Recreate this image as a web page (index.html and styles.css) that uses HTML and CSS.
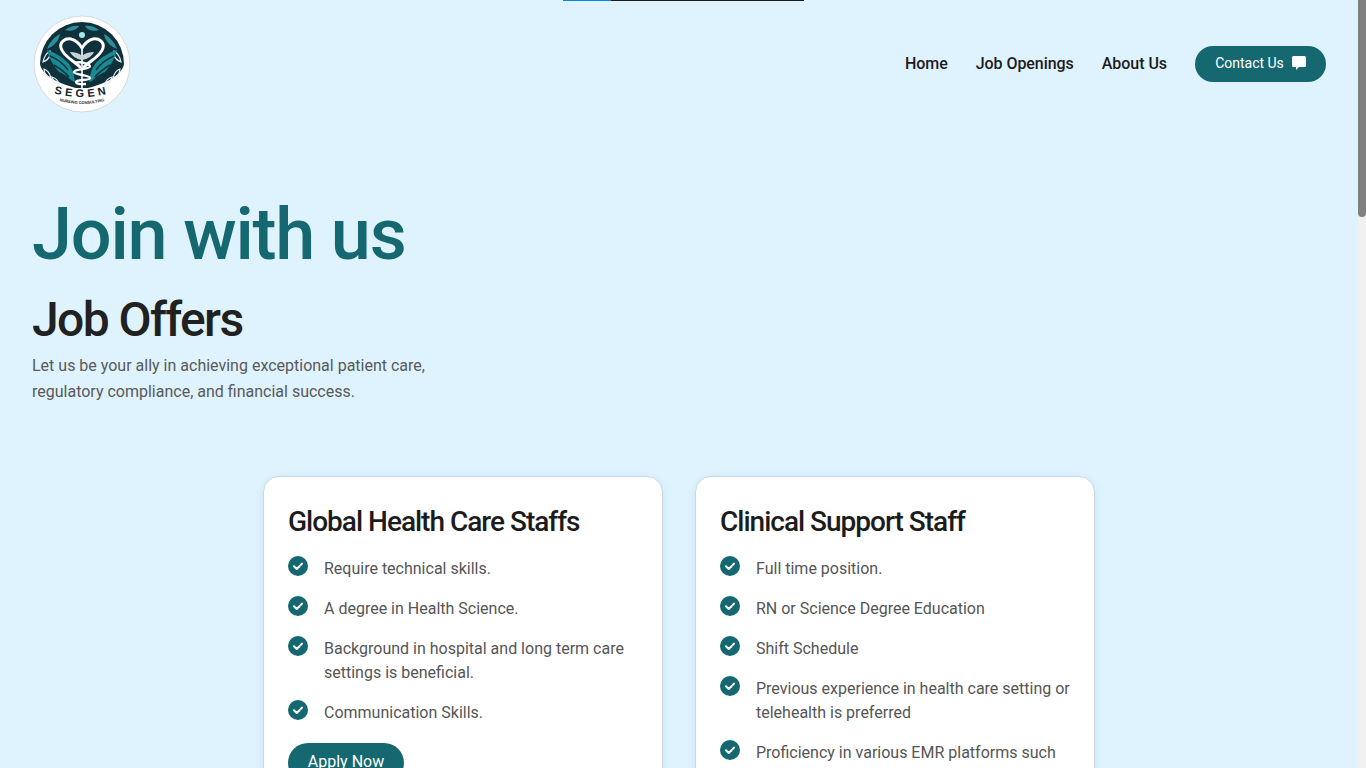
FILE: index.html
```html
<!DOCTYPE html>
<html lang="en">
<head>
<meta charset="utf-8">
<title>Segen Nursing Consulting – Job Offers</title>
<link rel="stylesheet" href="styles.css">
</head>
<body>
<div class="progress"><span class="progress-head"></span><span class="progress-tail"></span></div>
<div class="scrollbar"><span class="scrollbar-thumb"></span></div>
<header class="site-header">
  <a class="logo" href="#" aria-label="Segen Nursing Consulting">
    <svg viewBox="0 0 100 100" width="100" height="100">
      <defs>
        <path id="arc-name" d="M14 77 Q50 89 86 77"/>
        <path id="arc-sub" d="M18 84 Q50 96 82 84"/>
      </defs>
      <circle cx="50" cy="50" r="48" fill="#fff" stroke="#d3dade" stroke-width="1"/>
      <path d="M8 50A42 42 0 0 1 92 50C90 62 72 70 56 74L44 74C28 70 10 62 8 50z" fill="#10303c"/>
      <g fill="#2a8f98">
        <path d="M33 16c4-3 9-5 14-4-2 4-9 6-14 4zM67 16c-4-3-9-5-14-4 2 4 9 6 14 4z"/>
        <path d="M15 35c2-6 7-12 13-15-1 7-6 12-13 15zM85 35c-2-6-7-12-13-15 1 7 6 12 13 15z"/>
      </g>
      <g fill="none" stroke="#e7eef0" stroke-width="1.200">
        <path d="M11 48c1-6 4-9 7-11 1 5-2 9-7 11zM89 48c-1-6-4-9-7-11-1 5 2 9 7 11z"/>
        <path d="M12 55c3 1 6 5 7 9-4-1-7-5-7-9zM88 55c-3 1-6 5-7 9 4-1 7-5 7-9z"/>
        <path d="M20 63c3 1 6 3 7 7-4 0-6-3-7-7zM80 63c-3 1-6 3-7 7 4 0 6-3 7-7z"/>
      </g>
      <path d="M43 68C31 64 20 54 15 36c9 3 17 8 22 14 3 4 5 10 6 18z" fill="#178a94"/>
      <path d="M57 68C69 64 80 54 85 36c-9 3-17 8-22 14-3 4-5 10-6 18z" fill="#178a94"/>
      <path d="M18 42c7 3 14 8 18 14M22 51c5 3 11 7 15 12M28 59c4 2 8 5 11 8M82 42c-7 3-14 8-18 14M78 51c-5 3-11 7-15 12M72 59c-4 2-8 5-11 8" fill="none" stroke="#10303c" stroke-width="1.500"/>
      <circle cx="50" cy="21" r="3" fill="#a7e8e6"/>
      <path d="M48 53C42 47 31 42 29 34c-1.500-6 4-10 10-9 5 1 8 4 11 9 3-5 6-8 11-9 6-1 11.500 3 10 9-2 8-13 13-19 19" fill="none" stroke="#fff" stroke-width="3" stroke-linecap="round"/>
      <path d="M50 36v39" stroke="#e7eef0" stroke-width="1.800"/>
      <path d="M38 38c5 0 9 1 12 4 3-3 7-4 12-4-2 4-6 7-12 8-6-1-10-4-12-8z" fill="#c6d2d5"/>
      <path d="M42 49c8-2 16 1 16 3.500s-16 2.500-16 5.500 16 3 16 6-14 1-14 4 10 2 10 2" fill="none" stroke="#fff" stroke-width="2.400"/>
      <text class="logo-name"><textPath href="#arc-name" startOffset="50%" text-anchor="middle">SEGEN</textPath></text>
      <text class="logo-sub"><textPath href="#arc-sub" startOffset="50%" text-anchor="middle">NURSING CONSULTING</textPath></text>
    </svg>
  </a>
  <nav class="nav">
    <a class="nav-link" href="#">Home</a>
    <a class="nav-link" href="#">Job Openings</a>
    <a class="nav-link" href="#">About Us</a>
    <a class="btn btn-contact" href="#">Contact Us
      <svg viewBox="0 0 16 16" width="16" height="16"><path d="M2.500 1h11A1.500 1.500 0 0 1 15 2.500v8a1.500 1.500 0 0 1-1.500 1.500H8l-3 3v-3H2.500A1.500 1.500 0 0 1 1 10.500v-8A1.500 1.500 0 0 1 2.500 1z" fill="#fff"/></svg>
    </a>
  </nav>
</header>
<main>
  <section class="hero">
    <h1>Join with us</h1>
    <h2>Job Offers</h2>
    <p>Let us be your ally in achieving exceptional patient care,<br>regulatory compliance, and financial success.</p>
  </section>
  <section class="cards">
    <article class="card">
      <h3>Global Health Care Staffs</h3>
      <ul>
        <li><svg class="check" viewBox="0 0 20 20"><circle cx="10" cy="10" r="10"/><path d="M6 10.300l2.800 2.700L14 7.600"/></svg><span>Require technical skills.</span></li>
        <li><svg class="check" viewBox="0 0 20 20"><circle cx="10" cy="10" r="10"/><path d="M6 10.300l2.800 2.700L14 7.600"/></svg><span>A degree in Health Science.</span></li>
        <li><svg class="check" viewBox="0 0 20 20"><circle cx="10" cy="10" r="10"/><path d="M6 10.300l2.800 2.700L14 7.600"/></svg><span>Background in hospital and long term care settings is beneficial.</span></li>
        <li><svg class="check" viewBox="0 0 20 20"><circle cx="10" cy="10" r="10"/><path d="M6 10.300l2.800 2.700L14 7.600"/></svg><span>Communication Skills.</span></li>
      </ul>
      <a class="btn btn-apply" href="#">Apply Now</a>
    </article>
    <article class="card">
      <h3>Clinical Support Staff</h3>
      <ul>
        <li><svg class="check" viewBox="0 0 20 20"><circle cx="10" cy="10" r="10"/><path d="M6 10.300l2.800 2.700L14 7.600"/></svg><span>Full time position.</span></li>
        <li><svg class="check" viewBox="0 0 20 20"><circle cx="10" cy="10" r="10"/><path d="M6 10.300l2.800 2.700L14 7.600"/></svg><span>RN or Science Degree Education</span></li>
        <li><svg class="check" viewBox="0 0 20 20"><circle cx="10" cy="10" r="10"/><path d="M6 10.300l2.800 2.700L14 7.600"/></svg><span>Shift Schedule</span></li>
        <li><svg class="check" viewBox="0 0 20 20"><circle cx="10" cy="10" r="10"/><path d="M6 10.300l2.800 2.700L14 7.600"/></svg><span>Previous experience in health care setting or telehealth is preferred</span></li>
        <li><svg class="check" viewBox="0 0 20 20"><circle cx="10" cy="10" r="10"/><path d="M6 10.300l2.800 2.700L14 7.600"/></svg><span>Proficiency in various EMR platforms such as Epic and Cerner</span></li>
      </ul>
      <a class="btn btn-apply" href="#">Apply Now</a>
    </article>
  </section>
</main>
</body>
</html>
```
FILE: styles.css
```css
* { box-sizing: border-box; }
html { background: #dff3ff; }
body {
  margin: 0;
  padding-right: 8px;
  min-height: 2718px;
  background: #dff3ff;
  color: #212121;
  font-family: Roboto, "Liberation Sans", sans-serif;
  font-size: 16px;
}
a { color: inherit; text-decoration: none; }

.progress { position: fixed; top: 0; left: 563px; display: flex; height: 1px; }
.progress-head { width: 48px; background: #0a84e8; }
.progress-tail { width: 193px; background: #1a1a1a; }

.scrollbar { position: fixed; top: 0; right: 0; width: 8px; height: 100vh; background: #f1f1f1; }
.scrollbar-thumb { display: block; height: 217px; background: #808080; border-radius: 0 0 4px 4px; }

.site-header {
  display: flex;
  align-items: center;
  justify-content: space-between;
  padding: 14px 32px 0;
}
.logo { display: block; width: 100px; height: 100px; }
.logo svg { display: block; }
.logo-name { font: 700 11px "Liberation Sans", Arial, sans-serif; letter-spacing: 3.600px; fill: #16252c; }
.logo-sub { font: 700 4px "Liberation Sans", Arial, sans-serif; fill: #16252c; }

.nav { display: flex; align-items: center; gap: 28px; font-weight: 500; letter-spacing: -0.05px; color: #1c1c1c; }
.nav-link { padding-bottom: 2px; }
.btn { display: inline-flex; align-items: center; justify-content: center; background: #156870; color: #fff; border-radius: 999px; }
.btn-contact { gap: 7px; width: 131px; height: 36px; padding: 0 0 2px 1px; font-size: 14px; font-weight: 400; letter-spacing: 0; }

.hero { padding: 79px 32px 0; }
.hero h1 { margin: 0; font-size: 72px; line-height: 84px; font-weight: 500; letter-spacing: -1.200px; color: #156870; }
.hero h2 { margin: 15px 0 0; font-size: 48px; line-height: 56px; font-weight: 500; letter-spacing: -1.600px; color: #212121; }
.hero p { margin: 5px 0 0; line-height: 26px; color: #595959; }

.cards { display: flex; justify-content: center; gap: 32px; margin-top: 71px; align-items: flex-start; }
.card {
  width: 400px;
  padding: 26px 24px 24px;
  background: #fff;
  border: 1px solid #ccd8e0;
  border-radius: 16px;
  box-shadow: 0 2px 8px rgba(21, 104, 112, 0.10);
}
.card h3 { margin: 0 0 16px; font-size: 28px; line-height: 38px; font-weight: 500; letter-spacing: -1px; color: #1c1c1c; }
.card ul { margin: 0 0 18px; padding: 0; list-style: none; }
.card li { display: flex; gap: 16px; margin-bottom: 16px; line-height: 24px; color: #555; }
.card li:last-child { margin-bottom: 0; }
.check { flex: none; width: 20px; height: 20px; margin-top: -1px; }
.check circle { fill: #156870; }
.check path { fill: none; stroke: #fff; stroke-width: 2; stroke-linecap: round; stroke-linejoin: round; }
.btn-apply { width: 116px; height: 40px; padding-bottom: 3px; }
```
